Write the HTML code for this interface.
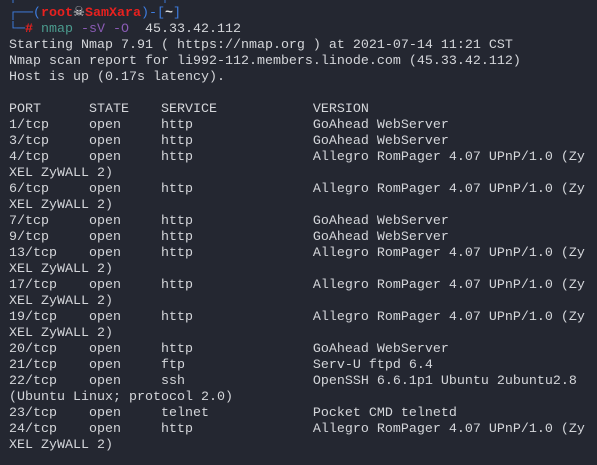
<!DOCTYPE html>
<html><head><meta charset="utf-8"><style>
html,body{margin:0;padding:0;background:#242731;width:597px;height:465px;overflow:hidden}
pre{margin:0;position:absolute;left:9px;top:-11px;font-family:"Liberation Mono","DejaVu Sans Mono",monospace;font-size:13.33px;line-height:16px;color:#d4d6da;white-space:pre}
.b{color:#3e7de0}.r{color:#e8211f;font-weight:bold}.t{color:#4b9b8e}.p{color:#8a5bb5}
.s{color:#e0e0e0;font-family:"DejaVu Sans",sans-serif}
</style></head><body>
<pre><span class="b">│                  │</span>
<span class="b">┌──(</span><span class="r">root<span class="s">☠</span>SamXara</span><span class="b">)-[</span><b style="color:#e0e0e0">~</b><span class="b">]</span>
<span class="b">└─</span><span class="r">#</span> <span class="t">nmap</span> <span class="p">-sV -O</span>  45.33.42.112
Starting Nmap 7.91 ( https://nmap.org ) at 2021-07-14 11:21 CST
Nmap scan report for li992-112.members.linode.com (45.33.42.112)
Host is up (0.17s latency).

PORT      STATE    SERVICE            VERSION
1/tcp     open     http               GoAhead WebServer
3/tcp     open     http               GoAhead WebServer
4/tcp     open     http               Allegro RomPager 4.07 UPnP/1.0 (Zy
XEL ZyWALL 2)
6/tcp     open     http               Allegro RomPager 4.07 UPnP/1.0 (Zy
XEL ZyWALL 2)
7/tcp     open     http               GoAhead WebServer
9/tcp     open     http               GoAhead WebServer
13/tcp    open     http               Allegro RomPager 4.07 UPnP/1.0 (Zy
XEL ZyWALL 2)
17/tcp    open     http               Allegro RomPager 4.07 UPnP/1.0 (Zy
XEL ZyWALL 2)
19/tcp    open     http               Allegro RomPager 4.07 UPnP/1.0 (Zy
XEL ZyWALL 2)
20/tcp    open     http               GoAhead WebServer
21/tcp    open     ftp                Serv-U ftpd 6.4
22/tcp    open     ssh                OpenSSH 6.6.1p1 Ubuntu 2ubuntu2.8
(Ubuntu Linux; protocol 2.0)
23/tcp    open     telnet             Pocket CMD telnetd
24/tcp    open     http               Allegro RomPager 4.07 UPnP/1.0 (Zy
XEL ZyWALL 2)</pre>
</body></html>
